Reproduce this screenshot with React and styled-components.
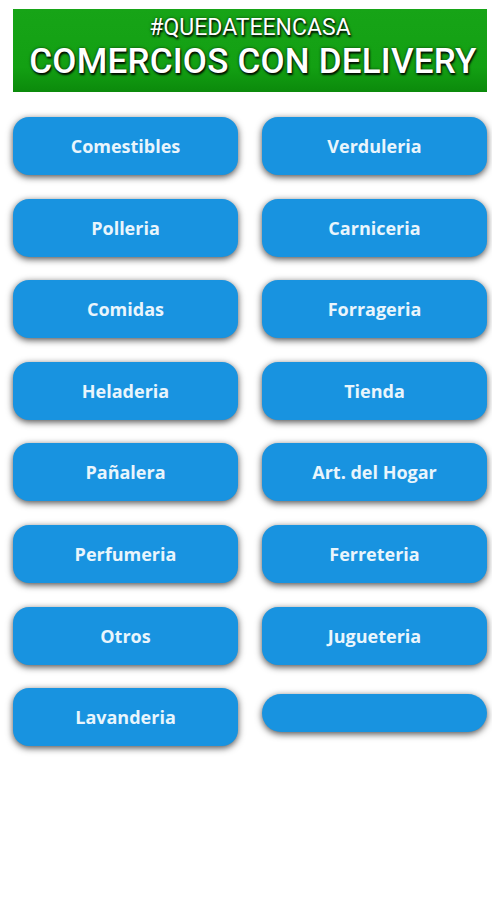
import React from "react";
import styled, { createGlobalStyle } from "styled-components";

const GlobalStyle = createGlobalStyle`
  html, body {
    margin: 0;
    padding: 0;
    background: #ffffff;
  }
`;

const Page = styled.div`
  width: 492px;
  min-height: 900px;
  box-sizing: border-box;
  padding: 9px 5px 0 13px;
  background: #ffffff;
`;

const Header = styled.header`
  height: 83px;
  box-sizing: border-box;
  padding-bottom: 6px;
  background: linear-gradient(180deg, #17a417 0%, #13a013 70%, #0b8a0b 100%);
  display: flex;
  flex-direction: column;
  align-items: center;
  justify-content: center;
  color: #ffffff;
  font-family: Roboto, "Liberation Sans", sans-serif;
  text-shadow: 1px 2px 2px rgba(0, 0, 0, 0.9), 0 0 3px rgba(0, 0, 0, 0.6);
  line-height: 1;
`;

const Tag = styled.div`
  font-size: 23px;
  font-weight: 400;
`;

const Title = styled.div`
  font-size: 35px;
  font-weight: 500;
  margin-top: 5px;
  padding-left: 6px;
  letter-spacing: 0.2px;
`;

const Grid = styled.div`
  display: grid;
  grid-template-columns: 225px 225px;
  grid-auto-rows: 58px;
  column-gap: 24px;
  row-gap: 23.6px;
  margin-top: 25px;
`;

const Button = styled.button`
  height: ${(p) => (p.$slim ? "38px" : "58px")};
  margin-top: ${(p) => (p.$slim ? "6px" : "0")};
  border: none;
  border-radius: ${(p) => (p.$slim ? "19px" : "16px")};
  background: #1893e0;
  color: #e9f5fc;
  font-family: "Open Sans", Lato, sans-serif;
  font-weight: 700;
  font-size: 18px;
  box-shadow: 0 2px 7px rgba(0, 0, 0, 0.7);
  padding: 0;
  cursor: pointer;
`;

const items = [
  "Comestibles",
  "Verduleria",
  "Polleria",
  "Carniceria",
  "Comidas",
  "Forrageria",
  "Heladeria",
  "Tienda",
  "Pañalera",
  "Art. del Hogar",
  "Perfumeria",
  "Ferreteria",
  "Otros",
  "Jugueteria",
  "Lavanderia",
];

export default function App() {
  return (
    <>
      <GlobalStyle />
      <Page>
        <Header>
          <Tag>#QUEDATEENCASA</Tag>
          <Title>COMERCIOS CON DELIVERY</Title>
        </Header>
        <Grid>
          {items.map((name) => (
            <Button key={name}>{name}</Button>
          ))}
          <Button $slim />
        </Grid>
      </Page>
    </>
  );
}
